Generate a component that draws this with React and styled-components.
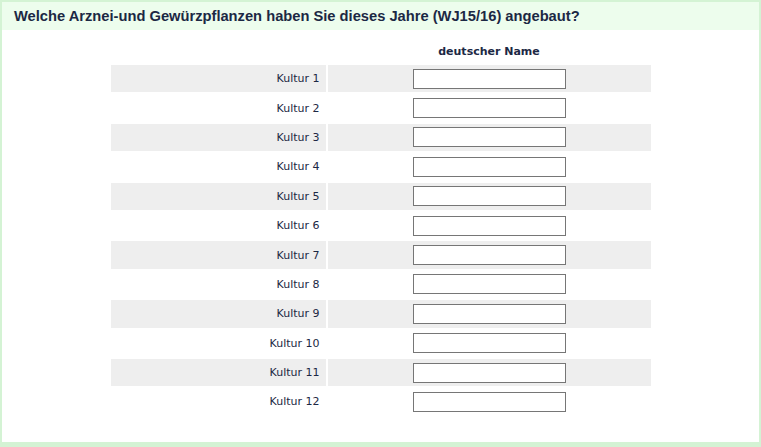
import styled, { createGlobalStyle } from "styled-components";

const GlobalStyle = createGlobalStyle`
  html, body {
    margin: 0;
    padding: 0;
    background: #fff;
  }
`;

const Frame = styled.div`
  box-sizing: border-box;
  height: 447px;
  border: 2px solid #d4f3d4;
  border-bottom-width: 5px;
  background: #fff;
`;

const Question = styled.div`
  height: 28px;
  background-color: #edfded;
  color: #1c2844;
  font-family: "Liberation Sans", Arial, sans-serif;
  font-weight: bold;
  font-size: 14.7px;
  line-height: 28px;
  padding-left: 12px;
`;

const Grid = styled.table`
  margin: 7px auto 0;
  border-spacing: 2px;
  font-family: "DejaVu Sans", Verdana, sans-serif;
  font-size: 11px;
  color: #1c2844;
`;

const HeadCell = styled.th`
  height: 24px;
  padding: 0;
  font-weight: bold;
  text-align: center;
`;

const Row = styled.tr`
  background-color: ${(p) => (p.$shaded ? "#eeeeee" : "transparent")};
`;

const Label = styled.td`
  width: 209px;
  height: 27.4px;
  padding: 0 6px 0 0;
  text-align: right;
`;

const Field = styled.td`
  width: 323px;
  padding: 0;
  text-align: center;
`;

const TextInput = styled.input`
  box-sizing: border-box;
  width: 153px;
  height: 20px;
  border: 1px solid #767676;
  padding: 1px 2px;
  vertical-align: middle;
  font-family: "DejaVu Sans", Verdana, sans-serif;
  font-size: 11px;
`;

const rows = Array.from({ length: 12 }, (_, i) => `Kultur ${i + 1}`);

export default function App() {
  return (
    <>
      <GlobalStyle />
      <Frame>
        <Question>
          Welche Arznei-und Gewürzpflanzen haben Sie dieses Jahre (WJ15/16)
          angebaut?
        </Question>
        <Grid>
          <thead>
            <tr>
              <HeadCell />
              <HeadCell>deutscher Name</HeadCell>
            </tr>
          </thead>
          <tbody>
            {rows.map((name, i) => (
              <Row key={name} $shaded={i % 2 === 0}>
                <Label>{name}</Label>
                <Field>
                  <TextInput type="text" />
                </Field>
              </Row>
            ))}
          </tbody>
        </Grid>
      </Frame>
    </>
  );
}
